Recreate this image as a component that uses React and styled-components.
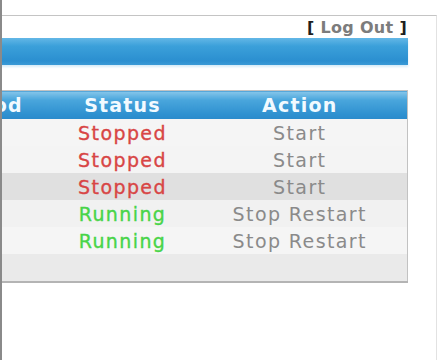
import React from "react";
import styled, { createGlobalStyle } from "styled-components";

const Global = createGlobalStyle`
  html, body { margin: 0; padding: 0; background: #ffffff; }
  body { font-family: "DejaVu Sans", Verdana, sans-serif; }
`;

const Frame = styled.div`
  height: 360px;
  width: 440px;
  box-sizing: border-box;
  border-left: 2px solid #8a8a8a;
  overflow: hidden;
  background: #fff;
  padding-top: 15px;
`;

const Window = styled.div`
  width: 435px;
  height: 345px;
  box-sizing: border-box;
  border-top: 1px solid #c4c4c4;
  border-right: 1px solid #e2e2e2;
  overflow: hidden;
`;

const Content = styled.div`
  margin-left: -90px;
  padding-right: 28px;
  display: flex;
  flex-direction: column;
`;

const TopLinks = styled.div`
  height: 21px;
  display: flex;
  justify-content: flex-end;
  align-items: center;
  padding-top: 1px;
  padding-right: 1px;
  font-size: 16px;
  font-weight: bold;
  letter-spacing: 0.3px;
  color: #1e1e1e;
  white-space: pre;
`;

const LinkText = styled.span`
  color: #7c7c7c;
`;

const Banner = styled.div`
  height: 27px;
  background: linear-gradient(#63b7e6 0%, #3ba0da 30%, #2b8fd0 85%, #3a9ad6 100%);
  box-shadow: 0 2px 2px rgba(140, 200, 235, 0.35);
`;

const Table = styled.table`
  margin-top: 25px;
  width: 100%;
  border-collapse: collapse;
  table-layout: fixed;
  border: 1px solid #c2c2c2;
  border-bottom: 2px solid #b4b4b4;
`;

const HeadCell = styled.th`
  height: 28px;
  padding: 0 ${(p) => (p.$padRight ? "8px" : "0")} 0 0;
  background: linear-gradient(#86c6ea 0%, #4aa6dc 30%, #2f91d0 80%, #2a8acb 100%);
  color: #f2faff;
  font-size: 19px;
  font-weight: bold;
  letter-spacing: 1.2px;
  text-align: center;
  white-space: nowrap;
`;

const Row = styled.tr`
  background: ${(p) => p.$bg};
`;

const Cell = styled.td`
  height: 27px;
  padding: 0 ${(p) => (p.$padRight ? "8px" : "0")} 0 0;
  text-align: center;
  font-size: 19px;
  letter-spacing: 1.4px;
  white-space: nowrap;
  color: #8a8a8a;
`;

const StatusText = styled.span`
  color: ${(p) => (p.$running ? "#48d448" : "#d84545")};
  -webkit-text-stroke: 0.35px currentColor;
`;

const rows = [
  { status: "Stopped", bg: "#f5f5f5" },
  { status: "Stopped", bg: "#f4f4f4" },
  { status: "Stopped", bg: "#e0e0e0" },
  { status: "Running", bg: "#f1f1f1" },
  { status: "Running", bg: "#f5f5f5" },
];

export default function App() {
  return (
    <>
      <Global />
      <Frame>
        <Window>
          <Content>
            <TopLinks>
              [ <LinkText>Log Out</LinkText> ]
            </TopLinks>
            <Banner />
            <Table>
              <colgroup>
                <col style={{ width: "132px" }} />
                <col style={{ width: "156px" }} />
                <col />
              </colgroup>
              <thead>
                <tr>
                  <HeadCell>Method</HeadCell>
                  <HeadCell>Status</HeadCell>
                  <HeadCell $padRight>Action</HeadCell>
                </tr>
              </thead>
              <tbody>
                {rows.map((r, i) => {
                  const running = r.status === "Running";
                  return (
                    <Row key={i} $bg={r.bg}>
                      <Cell />
                      <Cell>
                        <StatusText $running={running}>{r.status}</StatusText>
                      </Cell>
                      <Cell $padRight>{running ? "Stop Restart" : "Start"}</Cell>
                    </Row>
                  );
                })}
                <Row $bg="#eaeaea">
                  <Cell />
                  <Cell />
                  <Cell $padRight />
                </Row>
              </tbody>
            </Table>
          </Content>
        </Window>
      </Frame>
    </>
  );
}
